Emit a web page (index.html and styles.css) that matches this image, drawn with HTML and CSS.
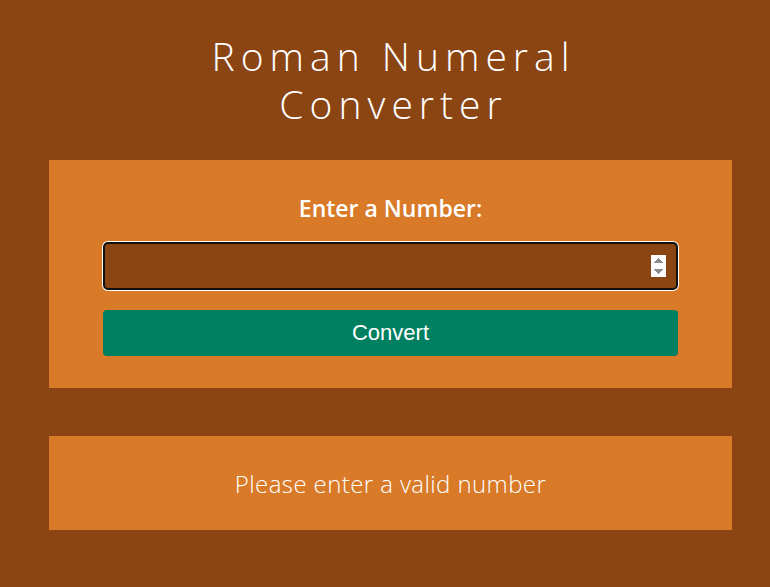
FILE: index.html
```html
<!DOCTYPE html>
<html lang="en">
<head>
<meta charset="utf-8">
<title>Roman Numeral Converter</title>
<link rel="stylesheet" href="styles.css">
</head>
<body>
<main class="page">
  <h1 class="title">Roman Numeral<br>Converter</h1>
  <form class="card form-card" onsubmit="return false">
    <label class="label" for="number">Enter a Number:</label>
    <input class="number-input" id="number" type="number" autofocus>
    <button class="convert-btn" type="button">Convert</button>
  </form>
  <div class="card output-card">
    <p class="output">Please enter a valid number</p>
  </div>
</main>
</body>
</html>
```
FILE: styles.css
```css
* { box-sizing: border-box; }
html, body { margin: 0; padding: 0; }
body {
  background: #8b4513;
  color: #fff;
  font-family: "Open Sans", "DejaVu Sans", sans-serif;
}
.page {
  width: 683px;
  margin-left: 49px;
  padding-top: 32px;
  padding-bottom: 57px;
  display: flex;
  flex-direction: column;
}
.title {
  margin: 0 0 32px;
  padding-left: 6px;
  text-align: center;
  font-weight: 300;
  font-size: 39px;
  line-height: 48px;
  letter-spacing: 6px;
}
.card {
  background: #d87a28;
}
.form-card {
  display: flex;
  flex-direction: column;
  align-items: center;
  padding: 30px 54px 32px;
  margin: 0 0 48px;
}
.label {
  font-size: 23px;
  font-weight: 600;
  line-height: 36px;
  margin-bottom: 16px;
}
.number-input {
  width: 100%;
  height: 48px;
  padding: 9px 10px;
  border: 2px solid #101010;
  border-radius: 5px;
  box-shadow: 0 0 0 1px #fff;
  outline: none;
  background: #8b4513;
  color: #fff;
  caret-color: #fff;
  font-family: "Liberation Sans", Arial, sans-serif;
  font-size: 20px;
}
.number-input:focus { outline: none; }
.number-input::-webkit-inner-spin-button { opacity: 1; }
.convert-btn {
  margin-top: 20px;
  width: 100%;
  height: 46px;
  border: none;
  border-radius: 4px;
  background: #008060;
  color: #fff;
  font-family: "Liberation Sans", Arial, sans-serif;
  font-size: 22px;
  cursor: pointer;
}
.output-card {
  height: 94px;
  display: flex;
  align-items: center;
  justify-content: center;
}
.output {
  margin: 0;
  font-size: 24px;
  font-weight: 300;
  letter-spacing: 0.4px;
}
```
